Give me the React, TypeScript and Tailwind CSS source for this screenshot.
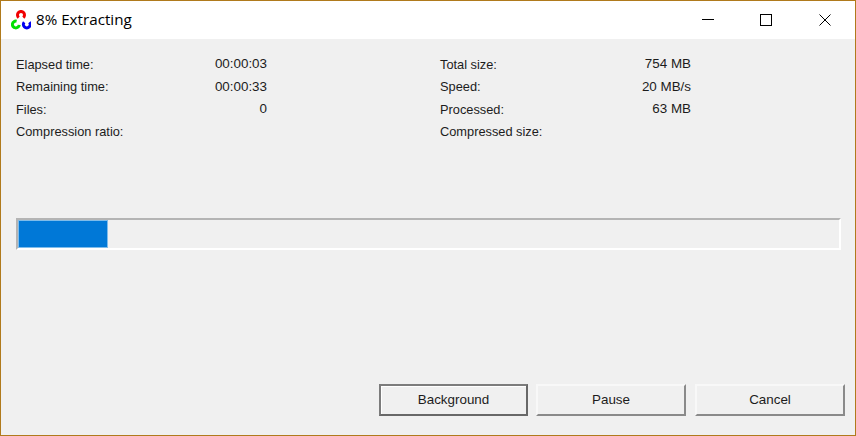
const leftStats = [
  { label: "Elapsed time:", value: "00:00:03" },
  { label: "Remaining time:", value: "00:00:33" },
  { label: "Files:", value: "0" },
  { label: "Compression ratio:", value: "" },
];

const rightStats = [
  { label: "Total size:", value: "754 MB" },
  { label: "Speed:", value: "20 MB/s" },
  { label: "Processed:", value: "63 MB" },
  { label: "Compressed size:", value: "" },
];

function StatColumn({ stats }: { stats: { label: string; value: string }[] }) {
  return (
    <div className="flex w-[251px] flex-col">
      {stats.map((s) => (
        <div key={s.label} className="flex h-[22.6px] items-center justify-between">
          <span>{s.label}</span>
          <span className="text-[13.4px]">{s.value}</span>
        </div>
      ))}
    </div>
  );
}

function AppIcon() {
  return (
    <svg width="20" height="20" viewBox="0 0 20 20" fill="none" strokeWidth="3">
      <path d="M7.7 7.6A3.5 3.5 0 1 1 12.3 7.6" stroke="#f00000" />
      <path d="M5.6 11.2A3.4 3.4 0 1 0 8.2 14.8" stroke="#00e000" />
      <path d="M13.2 12.3A3.4 3.4 0 1 0 18.4 12.3" stroke="#0000f0" />
    </svg>
  );
}

function Button({ label, isDefault, className }: { label: string; isDefault?: boolean; className: string }) {
  return (
    <button
      className={
        (isDefault
          ? "border-2 border-t-[#7c7c7c] border-l-[#7c7c7c] border-r-[#686868] border-b-[#686868] shadow-[inset_1px_1px_0_#ffffff] "
          : "border-2 border-t-[#f8f8f8] border-l-[#f8f8f8] border-r-[#8a8a8a] border-b-[#8a8a8a] ") +
        "flex h-[32px] items-center justify-center bg-[#f0f0f0] text-[13.4px] " +
        className
      }
    >
      {label}
    </button>
  );
}

export default function App() {
  return (
    <div className="flex h-[436px] w-[856px] flex-col border border-[#b07a1c] bg-[#f0f0f0] font-['Liberation_Sans',sans-serif] text-[12.8px] text-[#1c1c1c]">
      {/* Title bar */}
      <div className="flex h-[38px] shrink-0 items-center bg-white pl-[10px] text-black">
        <AppIcon />
        <span className="mb-[2px] ml-[5px] font-['Open_Sans',sans-serif] text-[15.2px]">8% Extracting</span>
        <div className="ml-auto flex items-center">
          <div className="flex h-[38px] w-[58px] items-center pl-[23px]">
            <svg width="12" height="12" viewBox="0 0 12 12"><path d="M0 5.5H12" stroke="#000" /></svg>
          </div>
          <div className="flex h-[38px] w-[59px] items-center pl-[23px]">
            <svg width="12" height="12" viewBox="0 0 12 12" fill="none"><rect x="0.5" y="0.5" width="11" height="11" stroke="#000" /></svg>
          </div>
          <div className="flex h-[38px] w-[59px] items-center pl-[23px]">
            <svg width="12" height="12" viewBox="0 0 12 12" fill="none"><path d="M0.5 0.5L11.5 11.5M11.5 0.5L0.5 11.5" stroke="#000" /></svg>
          </div>
        </div>
      </div>

      {/* Stats */}
      <div className="mt-[14px] flex gap-[173px] pl-[15px]">
        <StatColumn stats={leftStats} />
        <StatColumn stats={rightStats} />
      </div>

      {/* Progress */}
      <div className="mt-[75px] ml-[15px] h-[32px] w-[825px] border-2 border-t-[#b4b4b4] border-l-[#b4b4b4] border-r-white border-b-white bg-[#f0f0f0]">
        <div className="h-full w-[90px] border border-[#7fbcea] bg-[#0078d7]" />
      </div>

      {/* Buttons */}
      <div className="mt-auto mb-[19px] flex justify-end gap-[8px] pr-[10px]">
        <Button label="Background" isDefault className="w-[149px]" />
        <Button label="Pause" className="w-[150px]" />
        <Button label="Cancel" className="ml-px w-[150px]" />
      </div>
    </div>
  );
}
